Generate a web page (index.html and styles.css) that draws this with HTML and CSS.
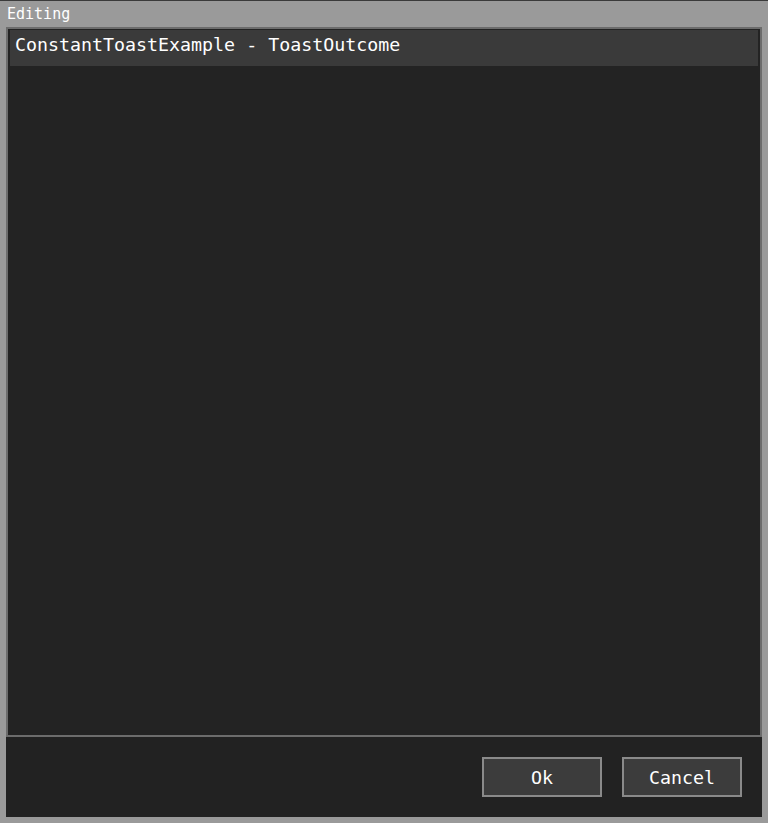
FILE: index.html
```html
<!DOCTYPE html>
<html>
<head>
<meta charset="utf-8">
<link rel="stylesheet" href="styles.css">
</head>
<body>
<div class="window">
  <div class="title">Editing</div>
  <div class="list">
    <div class="row">ConstantToastExample - ToastOutcome</div>
  </div>
  <div class="footer">
    <div class="btn">Ok</div>
    <div class="btn">Cancel</div>
  </div>
</div>
</body>
</html>
```
FILE: styles.css
```css
html, body {
  margin: 0;
  padding: 0;
  background: #9a9a9a;
}
.window {
  box-sizing: border-box;
  width: 768px;
  height: 823px;
  background: #9a9a9a;
  border-top: 1px solid #3a3a3a;
  padding: 0 6px 6px 6px;
  display: flex;
  flex-direction: column;
  font-family: "DejaVu Sans Mono", monospace;
  color: #ffffff;
}
.title {
  height: 26px;
  line-height: 26px;
  font-size: 15px;
  padding-left: 1px;
  color: #ffffff;
}
.list {
  flex: 1;
  background: #232323;
  border: 2px solid #6c6c6c;
  padding: 1px 2px 2px 2px;
}
.row {
  box-sizing: border-box;
  height: 36px;
  line-height: 30px;
  padding-bottom: 6px;
  background: #3a3a3a;
  font-size: 18.3px;
  padding-left: 5px;
}
.footer {
  height: 80px;
  background: #222222;
  display: flex;
  justify-content: flex-end;
  align-items: flex-start;
  gap: 20px;
  padding: 20px 20px 0 0;
  box-sizing: border-box;
}
.btn {
  box-sizing: border-box;
  width: 120px;
  height: 40px;
  border: 2px solid #8a8a8a;
  background: #3c3c3c;
  display: flex;
  align-items: center;
  justify-content: center;
  font-size: 18.3px;
}
```
